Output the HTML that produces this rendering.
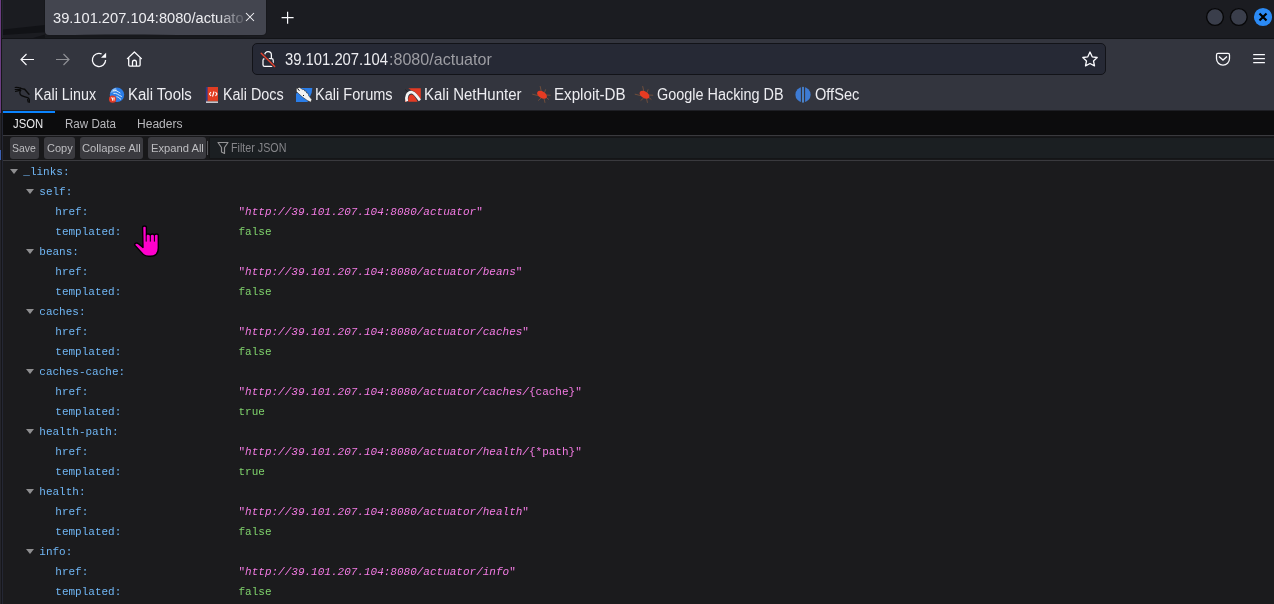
<!DOCTYPE html>
<html><head><meta charset="utf-8">
<style>
*{box-sizing:border-box;margin:0;padding:0}
html,body{width:1274px;height:604px;overflow:hidden;background:#1b1b1d}
body{position:relative;font-family:"Liberation Sans",sans-serif}
.a{position:absolute}
.t{position:absolute;white-space:nowrap;transform-origin:0 0}
svg{position:absolute;overflow:visible}
.row{position:absolute;height:20px;font-family:"Liberation Mono",monospace;font-size:11px;line-height:20px;white-space:pre}
.k{color:#70b6f4}
.s{color:#f47be4}
.s i{font-style:italic}
.b{color:#7fd26c}
.tri{position:absolute;width:0;height:0;border-left:4px solid transparent;border-right:4px solid transparent;border-top:5px solid #8e8e90}
</style></head><body>
<div class="a" style="left:0;top:0;width:1274px;height:39px;background:#1b1c21"></div>
<div class="a" style="left:0;top:37.5px;width:1274px;height:1.5px;background:#121317"></div>
<div class="a" style="left:45px;top:0;width:221px;height:35px;background:#43454f;border-radius:0 0 4px 4px;box-shadow:0 0 0 1px #17181c"></div>
<div class="a" style="left:0;top:39px;width:1274px;height:71.5px;background:#33353e"></div>
<div class="a" style="left:252px;top:43px;width:854px;height:32px;background:#262935;border:1px solid #121318;border-radius:5px"></div>
<div class="a" style="left:0;top:110px;width:1274px;height:1px;background:#1e1f24"></div>
<div class="a" style="left:3px;top:111px;width:1271px;height:24px;background:#0c0c0d"></div>
<div class="a" style="left:3px;top:111px;width:52px;height:2px;background:#0a84ff"></div>
<div class="a" style="left:3px;top:135px;width:1271px;height:26px;background:#18181a;border-top:1px solid #3a3a3e;border-bottom:1px solid #3a3a3e"></div>
<div class="a" style="left:208.5px;top:136.5px;width:1066px;height:22.5px;background:#1b1f22;border:1px solid #141517"></div>
<div class="a" style="left:10px;top:137px;width:29px;height:22px;background:#3a3a3f;border-radius:3px"></div>
<div class="a" style="left:44px;top:137px;width:31px;height:22px;background:#3a3a3f;border-radius:3px"></div>
<div class="a" style="left:80px;top:137px;width:63px;height:22px;background:#3a3a3f;border-radius:3px"></div>
<div class="a" style="left:148px;top:137px;width:58px;height:22px;background:#3a3a3f;border-radius:3px"></div>
<div class="a" style="left:207px;top:141px;width:1px;height:14px;background:#5a5a5e"></div>
<div class="a" style="left:0;top:0;width:1px;height:113px;background:#6c3d82"></div>
<div class="a" style="left:0;top:113px;width:1px;height:491px;background:#25252b"></div>
<div class="a" style="left:0;top:150px;width:1px;height:10px;background:#3b5fb0"></div>
<div class="a" style="left:1px;top:0;width:1px;height:604px;background:#16161a"></div>
<div class="a" style="left:2px;top:0;width:1px;height:38px;background:#23262f"></div>
<div class="a" style="left:2px;top:111px;width:1px;height:493px;background:#242734"></div>
<svg style="left:0;top:0" width="300" height="40"><path d="M3 29.6 L45 24.9 V32.2 L3 35 Z" fill="#111216"/><path d="M33 38 L45 34.4 V38 Z" fill="#121317"/><path d="M45 36 C120 33 200 35 266 37.5 L45 37.5 Z" fill="#17181c"/></svg>
<svg style="left:0;top:0" width="1274" height="604">
  <path d="M246 13 L254 21 M254 13 L246 21" stroke="#fbfbfe" stroke-width="1.05"/>
  <path d="M281.6 17.7 H293.6 M287.6 11.7 V23.7" stroke="#fbfbfe" stroke-width="1.2"/>
  <circle cx="1215" cy="17" r="8.4" fill="#3a3e4b" stroke="#070708" stroke-width="1.4"/>
  <circle cx="1238.8" cy="17" r="8.4" fill="#3a3e4b" stroke="#070708" stroke-width="1.4"/>
  <circle cx="1263" cy="17" r="9.1" fill="#2b8af5"/>
  <path d="M1259.5 13.5 L1266.5 20.5 M1266.5 13.5 L1259.5 20.5" stroke="#000" stroke-width="2.2"/>
  <path d="M21 59.5 H34 M26.5 54 L21 59.5 L26.5 65" stroke="#fbfbfe" stroke-width="1.15" fill="none"/>
  <path d="M56 59.5 H69 M63.5 54 L69 59.5 L63.5 65" stroke="#8f9095" stroke-width="1.15" fill="none"/>
  <path d="M105.6 60 A6.6 6.6 0 1 1 101.6 53.9" stroke="#fbfbfe" stroke-width="1.3" fill="none"/>
  <path d="M101 57.7 L106.1 52.7 V57.7 Z" fill="#fbfbfe"/>
  <path d="M127.4 58.6 L134.4 52 L141.4 58.6" stroke="#fbfbfe" stroke-width="1.3" fill="none" stroke-linecap="round" stroke-linejoin="round"/>
  <path d="M128.7 57.6 V65 Q128.7 66.1 129.8 66.1 H139 Q140.1 66.1 140.1 65 V57.6" stroke="#fbfbfe" stroke-width="1.3" fill="none"/>
  <path d="M132.5 66 V62.2 A1.95 1.95 0 0 1 136.4 62.2 V66" stroke="#fbfbfe" stroke-width="1.3" fill="none"/>
  <path d="M264.6 58 V55 A3.4 3.4 0 0 1 271.4 55 V58" stroke="#fbfbfe" stroke-width="1.25" fill="none"/>
  <rect x="263" y="58.6" width="10.2" height="7.8" rx="1.6" stroke="#fbfbfe" stroke-width="1.25" fill="none"/>
  <path d="M261.2 53.2 L274.7 66.5" stroke="#262935" stroke-width="3.2"/>
  <path d="M261.2 53.2 L274.7 66.5" stroke="#e5412d" stroke-width="1.4" stroke-linecap="round"/>
  <path d="M1090 52 L1092.2 56.8 L1097.2 57.5 L1093.5 61 L1094.5 65.9 L1090 63.5 L1085.5 65.9 L1086.5 61 L1082.8 57.5 L1087.8 56.8 Z" stroke="#fbfbfe" stroke-width="1.3" fill="none" stroke-linejoin="round"/>
  <path d="M1218 53.4 H1228 A1.5 1.5 0 0 1 1229.5 54.9 V58.6 A6.5 6.5 0 0 1 1216.5 58.6 V54.9 A1.5 1.5 0 0 1 1218 53.4 Z" stroke="#fbfbfe" stroke-width="1.25" fill="none"/>
  <path d="M1219 56.4 L1223 60.1 L1227 56.4" stroke="#fbfbfe" stroke-width="1.3" fill="none"/>
  <path d="M1253.2 54.6 H1264.9 M1253.2 58.6 H1264.9 M1253.2 62.6 H1264.9" stroke="#fbfbfe" stroke-width="1.2"/>
  <path d="M218 142.5 H228 L224.5 147.5 V153.5 L221.5 152 V147.5 Z" stroke="#939395" stroke-width="1.2" fill="none" stroke-linejoin="round"/>

  <!-- kali dragon -->
  <g stroke="#0a0a0a" fill="none" stroke-linecap="round" stroke-width="1.2">
    <path d="M15.2 87.5 C17 87.4 19 87.6 20.6 88.3 M15.2 89.5 H20.2 M15.6 91.4 C17 91.2 18.6 90.8 19.8 90.4"/>
    <path d="M20.2 88.2 C21.8 88.8 23 89.2 24.6 89.3 L29 94.2" stroke-width="1.4"/>
    <path d="M20.8 90.2 C19.4 91.4 19.4 94.6 21.6 95.6 C23.4 96.5 26.2 97 28 97.8 C29.4 98.6 29.6 100.4 29.2 102.4" stroke-width="1.3"/>
    <path d="M27.6 99.6 L28.2 102"/>
  </g>
  <!-- kali tools -->
  <circle cx="117" cy="94.8" r="7.2" fill="#2a7de8"/>
  <path d="M110.5 93 A7.2 7.2 0 0 1 116 87.7 L117 91 Z" fill="#7fb3f0"/>
  <path d="M113 90.4 C115.5 89.6 117.6 91.6 120.4 93.2 M113.4 93.4 C116 92.6 118.4 95 121.8 96.6 M116.5 96.8 C118 96.6 119.5 98.4 121 99.4" stroke="#dcecfb" stroke-width="1" fill="none"/>
  <circle cx="112.6" cy="99.2" r="3.6" fill="#e03a26"/>
  <path d="M110.9 97.9 H112.5 V100.7 M113.3 97.9 H114.7 M114 97.9 V100.7" stroke="#fff" stroke-width="0.9" fill="none"/>
  <!-- kali docs -->
  <rect x="205.8" y="87" width="2" height="15" fill="#2d3a8c"/>
  <rect x="207.6" y="87" width="10.4" height="14.2" fill="#e13d22"/>
  <rect x="206" y="100.8" width="12" height="0.8" fill="#a06040"/>
  <rect x="206" y="101.5" width="12" height="1.4" fill="#d6d6de"/>
  <path d="M211 92 L209.5 94 L211 96 M215.5 92 L217 94 L215.5 96 M214 91.5 L212.5 96.5" stroke="#fff" stroke-width="1.1" fill="none"/>
  <!-- kali forums -->
  <path d="M300 88 L312.3 88 L311.6 93 L307.5 102 L296 102 L296 94 Z" fill="#2a7de8"/>
  <path d="M296.3 88.6 L299.6 87.4 L302.6 89.6 L304.2 89.4 L304.6 91 L306.2 91.2 L306.6 93 L308.2 93.4 L308.6 95.6 L311.8 99.6 L310.8 102.2 L307.2 100.4 L302.4 97 L299 94 L296.4 91.4 Z" fill="#f2f2f2" stroke="#1a1a1a" stroke-width="0.5"/>
  <path d="M297.6 88.6 L299.4 90.8 M303 95.2 L304 95.8" stroke="#111" stroke-width="1"/>
  <!-- nethunter -->
  <path d="M408.3 88.3 H420.8 V99.2 C418 96 416 91.6 411.5 90.6 Z" fill="#e33b24"/>
  <path d="M408.3 101.8 C407.8 97.2 409.3 94.4 411.4 94.4 C413.6 94.4 416 98 417.6 101.8 Z" fill="#e33b24"/>
  <path d="M405 98 L406.4 102 H405 Z" fill="#e33b24"/>
  <path d="M406.8 101.3 C405.6 96.6 407.6 92.1 411.2 92.1 C414.6 92.1 417.2 97 419.9 100.3" stroke="#f4f4f4" stroke-width="2.7" fill="none"/>
  <path d="M405.2 89.6 L407.8 91.8" stroke="#222" stroke-width="1"/>
  <!-- exploit db bug -->
  <g transform="translate(542,94.8) rotate(32)">
    <path d="M-2.5 -2.6 L-6.2 -6.4 M1 -3 L0.2 -6.6 M3.6 -2 L7.6 -4.2 M-2.5 2.6 L-8.6 4.6 M1 3 L-0.2 7 M3.6 2 L6.8 5.2 M5 0 L8.4 0.4" stroke="#b0683a" stroke-width="0.8" opacity="0.55"/>
    <ellipse cx="0" cy="0" rx="5.4" ry="3.3" fill="#e63b22"/>
  </g>
  <g transform="translate(644.5,94.8) rotate(32)">
    <path d="M-2.5 -2.6 L-6.2 -6.4 M1 -3 L0.2 -6.6 M3.6 -2 L7.6 -4.2 M-2.5 2.6 L-8.6 4.6 M1 3 L-0.2 7 M3.6 2 L6.8 5.2 M5 0 L8.4 0.4" stroke="#b0683a" stroke-width="0.8" opacity="0.55"/>
    <ellipse cx="0" cy="0" rx="5.4" ry="3.3" fill="#e63b22"/>
  </g>
  <!-- offsec -->
  <circle cx="803" cy="94.7" r="7.6" fill="#3d7bd4"/>
  <rect x="800.9" y="86" width="1.2" height="18" fill="#33353e"/>
  <rect x="803.9" y="86" width="1.2" height="18" fill="#33353e"/>
  <path d="M802.5 86.8 H803.5 L804 102.6 H802 Z" fill="#4f84c6"/>
  <!-- cursor -->
  <path d="M142.6 227.6 Q142.6 226 144.5 226 Q146.4 226 146.4 227.6 V234.8 Q146.4 234 148.2 234 Q150.1 234 150.3 235 Q150.5 234 152.3 234 Q154.2 234 154.4 235 Q154.6 234 156.4 234 Q158.3 234 158.3 235.6 V248 Q158.3 256.2 150.5 256.2 H148.5 Q144.2 256.2 141.6 252.6 L135.2 245.6 Q134.2 244.2 135.4 243.3 Q136.8 242.4 138.4 243.7 L143 247.4 Z" fill="#ff00cc" stroke="#000" stroke-width="1.4" stroke-linejoin="round"/>
  <path d="M146.2 234.8 V241.6 M150.3 235 V241.6 M154.4 235 V241.6" stroke="#000" stroke-width="1"/>
</svg>
<div class="t" id="tabtitle" style="left:52.50px;top:10.40px;font-size:15.2px;line-height:15.2px;color:#ededf1;transform:scaleX(0.9644);-webkit-mask-image:linear-gradient(to right,#000 169.5px,rgba(0,0,0,0.08) 199.6px,transparent 202.7px);">39.101.207.104:8080/actuato</div>
<div class="t" id="url1" style="left:284.95px;top:52.00px;font-size:15.9px;line-height:15.9px;color:#ededf1;transform:scaleX(0.9314);">39.101.207.104</div>
<div class="t" id="url2" style="left:389.02px;top:52.00px;font-size:15.9px;line-height:15.9px;color:#9d9da3;transform:scaleX(1.0116);">:8080/actuator</div>
<div class="t" id="bm1" style="left:34.19px;top:87.15px;font-size:15.8px;line-height:15.8px;color:#ededf1;transform:scaleX(0.9060);">Kali Linux</div>
<div class="t" id="bm2" style="left:128.30px;top:87.15px;font-size:15.8px;line-height:15.8px;color:#ededf1;transform:scaleX(0.9480);">Kali Tools</div>
<div class="t" id="bm3" style="left:223.35px;top:87.15px;font-size:15.8px;line-height:15.8px;color:#ededf1;transform:scaleX(0.9091);">Kali Docs</div>
<div class="t" id="bm4" style="left:315.39px;top:87.15px;font-size:15.8px;line-height:15.8px;color:#ededf1;transform:scaleX(0.9211);">Kali Forums</div>
<div class="t" id="bm5" style="left:424.29px;top:87.15px;font-size:15.8px;line-height:15.8px;color:#ededf1;transform:scaleX(0.9496);">Kali NetHunter</div>
<div class="t" id="bm6" style="left:553.67px;top:87.15px;font-size:15.8px;line-height:15.8px;color:#ededf1;transform:scaleX(0.9597);">Exploit-DB</div>
<div class="t" id="bm7" style="left:657.38px;top:87.15px;font-size:15.8px;line-height:15.8px;color:#ededf1;transform:scaleX(0.9126);">Google Hacking DB</div>
<div class="t" id="bm8" style="left:814.71px;top:87.15px;font-size:15.8px;line-height:15.8px;color:#ededf1;transform:scaleX(0.9224);">OffSec</div>
<div class="t" id="jt1" style="left:13.45px;top:118.30px;font-size:12px;line-height:12px;color:#ececee;transform:scaleX(0.9426);">JSON</div>
<div class="t" id="jt2" style="left:65.31px;top:118.30px;font-size:12px;line-height:12px;color:#b9b9bd;transform:scaleX(0.9663);">Raw Data</div>
<div class="t" id="jt3" style="left:137.03px;top:118.30px;font-size:12px;line-height:12px;color:#b9b9bd;transform:scaleX(1.0050);">Headers</div>
<div class="t" id="b1" style="left:12.48px;top:143.00px;font-size:11.2px;line-height:11.2px;color:#bdbdc0;transform:scaleX(0.9340);">Save</div>
<div class="t" id="b2" style="left:46.51px;top:143.00px;font-size:11.2px;line-height:11.2px;color:#bdbdc0;transform:scaleX(0.9852);">Copy</div>
<div class="t" id="b3" style="left:81.95px;top:143.00px;font-size:11.2px;line-height:11.2px;color:#bdbdc0;transform:scaleX(1.0044);">Collapse All</div>
<div class="t" id="b4" style="left:150.78px;top:143.00px;font-size:11.2px;line-height:11.2px;color:#bdbdc0;transform:scaleX(0.9997);">Expand All</div>
<div class="t" id="filt" style="left:231.44px;top:143.20px;font-size:11.9px;line-height:11.9px;color:#86868a;transform:scaleX(0.9016);">Filter JSON</div>
<div style="position:absolute;left:0;top:0;width:1274px;height:604px;will-change:transform">
<div class="tri" style="left:10px;top:169px"></div>
<div class="row k" style="left:23.3px;top:162px">_links:</div>
<div class="tri" style="left:26px;top:189px"></div>
<div class="row k" style="left:39.3px;top:182px">self:</div>
<div class="row k" style="left:55.3px;top:202px">href:</div>
<div class="row s" style="left:238.5px;top:202px">"<i>http://39.101.207.104:8080/actuator</i>"</div>
<div class="row k" style="left:55.3px;top:222px">templated:</div>
<div class="row b" style="left:238.5px;top:222px">false</div>
<div class="tri" style="left:26px;top:249px"></div>
<div class="row k" style="left:39.3px;top:242px">beans:</div>
<div class="row k" style="left:55.3px;top:262px">href:</div>
<div class="row s" style="left:238.5px;top:262px">"<i>http://39.101.207.104:8080/actuator/beans</i>"</div>
<div class="row k" style="left:55.3px;top:282px">templated:</div>
<div class="row b" style="left:238.5px;top:282px">false</div>
<div class="tri" style="left:26px;top:309px"></div>
<div class="row k" style="left:39.3px;top:302px">caches:</div>
<div class="row k" style="left:55.3px;top:322px">href:</div>
<div class="row s" style="left:238.5px;top:322px">"<i>http://39.101.207.104:8080/actuator/caches</i>"</div>
<div class="row k" style="left:55.3px;top:342px">templated:</div>
<div class="row b" style="left:238.5px;top:342px">false</div>
<div class="tri" style="left:26px;top:369px"></div>
<div class="row k" style="left:39.3px;top:362px">caches-cache:</div>
<div class="row k" style="left:55.3px;top:382px">href:</div>
<div class="row s" style="left:238.5px;top:382px">"<i>http://39.101.207.104:8080/actuator/caches/</i>{cache}"</div>
<div class="row k" style="left:55.3px;top:402px">templated:</div>
<div class="row b" style="left:238.5px;top:402px">true</div>
<div class="tri" style="left:26px;top:429px"></div>
<div class="row k" style="left:39.3px;top:422px">health-path:</div>
<div class="row k" style="left:55.3px;top:442px">href:</div>
<div class="row s" style="left:238.5px;top:442px">"<i>http://39.101.207.104:8080/actuator/health/</i>{*path}"</div>
<div class="row k" style="left:55.3px;top:462px">templated:</div>
<div class="row b" style="left:238.5px;top:462px">true</div>
<div class="tri" style="left:26px;top:489px"></div>
<div class="row k" style="left:39.3px;top:482px">health:</div>
<div class="row k" style="left:55.3px;top:502px">href:</div>
<div class="row s" style="left:238.5px;top:502px">"<i>http://39.101.207.104:8080/actuator/health</i>"</div>
<div class="row k" style="left:55.3px;top:522px">templated:</div>
<div class="row b" style="left:238.5px;top:522px">false</div>
<div class="tri" style="left:26px;top:549px"></div>
<div class="row k" style="left:39.3px;top:542px">info:</div>
<div class="row k" style="left:55.3px;top:562px">href:</div>
<div class="row s" style="left:238.5px;top:562px">"<i>http://39.101.207.104:8080/actuator/info</i>"</div>
<div class="row k" style="left:55.3px;top:582px">templated:</div>
<div class="row b" style="left:238.5px;top:582px">false</div>
</div>
</body></html>
